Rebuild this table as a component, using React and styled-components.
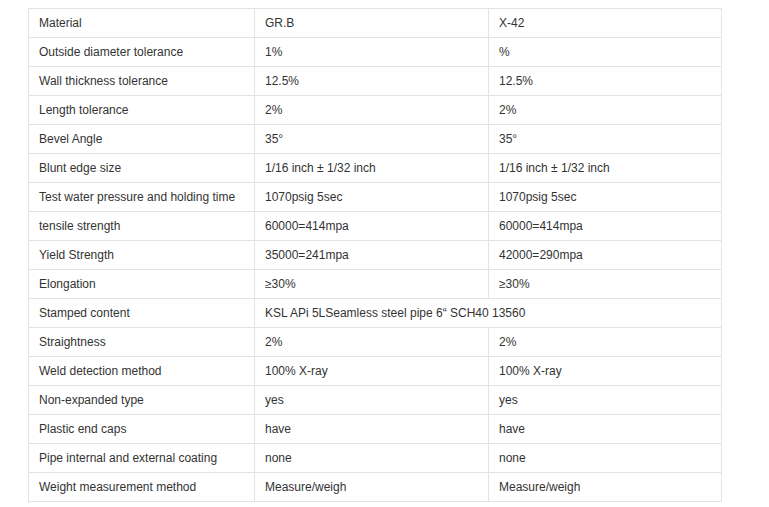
import styled, { createGlobalStyle } from 'styled-components'

const GlobalStyle = createGlobalStyle`
    body {
        margin: 0;
        background: #fff;
        font-family: "Liberation Sans", Arial, sans-serif;
    }
`

const rows = [
    ['Material', 'GR.B', 'X-42'],
    ['Outside diameter tolerance', '1%', '%'],
    ['Wall thickness tolerance', '12.5%', '12.5%'],
    ['Length tolerance', '2%', '2%'],
    ['Bevel Angle', '35°', '35°'],
    ['Blunt edge size', '1/16 inch ± 1/32 inch', '1/16 inch ± 1/32 inch'],
    ['Test water pressure and holding time', '1070psig 5sec', '1070psig 5sec'],
    ['tensile strength', '60000=414mpa', '60000=414mpa'],
    ['Yield Strength', '35000=241mpa', '42000=290mpa'],
    ['Elongation', '≥30%', '≥30%'],
    ['Stamped content', 'KSL APi 5LSeamless steel pipe 6“ SCH40 13560'],
    ['Straightness', '2%', '2%'],
    ['Weld detection method', '100% X-ray', '100% X-ray'],
    ['Non-expanded type', 'yes', 'yes'],
    ['Plastic end caps', 'have', 'have'],
    ['Pipe internal and external coating', 'none', 'none'],
    ['Weight measurement method', 'Measure/weigh', 'Measure/weigh'],
]

export default function App() {
    return (
        <Page>
            <GlobalStyle />
            <Table>
                <colgroup>
                    <Col $width={226} />
                    <Col $width={234} />
                    <Col $width={233} />
                </colgroup>
                <tbody>
                    {rows.map((row) => (
                        <Row key={row[0]}>
                            {row.map((cell, i) => (
                                <Cell
                                    key={i}
                                    colSpan={row.length === 2 && i === 1 ? 2 : 1}
                                >
                                    {cell}
                                </Cell>
                            ))}
                        </Row>
                    ))}
                </tbody>
            </Table>
        </Page>
    )
}

const Page = styled.div`
    padding: 8px 0 0 28px;
`

const Table = styled.table`
    border-collapse: collapse;
    table-layout: fixed;
    width: 694px;
`

const Col = styled.col`
    width: ${(p) => p.$width}px;
`

const Row = styled.tr`
    background: #fff;
`

const Cell = styled.td`
    height: 28px;
    padding: 0 10px;
    border: 1px solid #e3e3e3;
    font-size: 12px;
    color: #333;
    line-height: 28px;
    white-space: nowrap;
`
